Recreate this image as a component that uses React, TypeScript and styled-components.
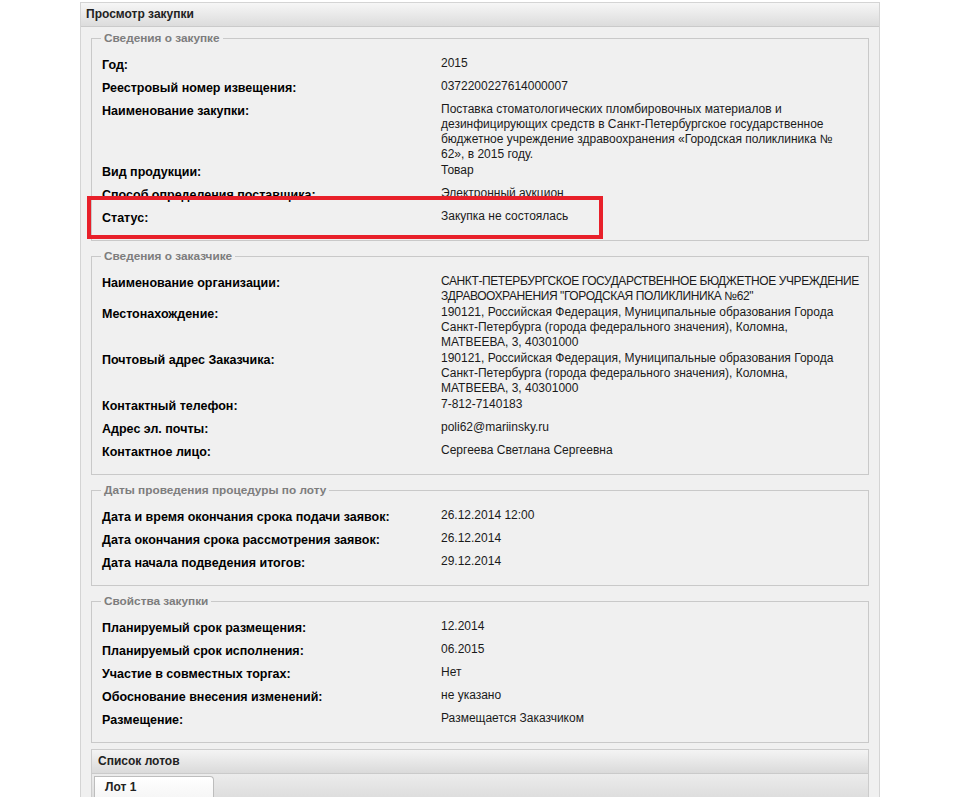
import React from 'react';
import styled, { createGlobalStyle } from 'styled-components';

interface Field {
  label: string;
  lines: string[];
  tight?: boolean;
}

interface Section {
  title: string;
  fields: Field[];
}

const address = [
  '190121, Российская Федерация, Муниципальные образования Города',
  'Санкт-Петербурга (города федерального значения), Коломна,',
  'МАТВЕЕВА, 3, 40301000',
];

const sections: Section[] = [
  {
    title: 'Сведения о закупке',
    fields: [
      { label: 'Год:', lines: ['2015'] },
      { label: 'Реестровый номер извещения:', lines: ['0372200227614000007'] },
      {
        label: 'Наименование закупки:',
        lines: [
          'Поставка стоматологических пломбировочных материалов и',
          'дезинфицирующих средств в Санкт-Петербургское государственное',
          'бюджетное учреждение здравоохранения «Городская поликлиника №',
          '62», в 2015 году.',
        ],
      },
      { label: 'Вид продукции:', lines: ['Товар'] },
      { label: 'Способ определения поставщика:', lines: ['Электронный аукцион'] },
      { label: 'Статус:', lines: ['Закупка не состоялась'] },
    ],
  },
  {
    title: 'Сведения о заказчике',
    fields: [
      {
        label: 'Наименование организации:',
        lines: [
          'САНКТ-ПЕТЕРБУРГСКОЕ ГОСУДАРСТВЕННОЕ БЮДЖЕТНОЕ УЧРЕЖДЕНИЕ',
          'ЗДРАВООХРАНЕНИЯ "ГОРОДСКАЯ ПОЛИКЛИНИКА №62"',
        ],
        tight: true,
      },
      { label: 'Местонахождение:', lines: address },
      { label: 'Почтовый адрес Заказчика:', lines: address },
      { label: 'Контактный телефон:', lines: ['7-812-7140183'] },
      { label: 'Адрес эл. почты:', lines: ['poli62@mariinsky.ru'] },
      { label: 'Контактное лицо:', lines: ['Сергеева Светлана Сергеевна'] },
    ],
  },
  {
    title: 'Даты проведения процедуры по лоту',
    fields: [
      { label: 'Дата и время окончания срока подачи заявок:', lines: ['26.12.2014 12:00'] },
      { label: 'Дата окончания срока рассмотрения заявок:', lines: ['26.12.2014'] },
      { label: 'Дата начала подведения итогов:', lines: ['29.12.2014'] },
    ],
  },
  {
    title: 'Свойства закупки',
    fields: [
      { label: 'Планируемый срок размещения:', lines: ['12.2014'] },
      { label: 'Планируемый срок исполнения:', lines: ['06.2015'] },
      { label: 'Участие в совместных торгах:', lines: ['Нет'] },
      { label: 'Обоснование внесения изменений:', lines: ['не указано'] },
      { label: 'Размещение:', lines: ['Размещается Заказчиком'] },
    ],
  },
];

const App: React.FC = () => {
  return (
    <Page>
      <GlobalStyle />
      <Panel>
        <PanelHeader>Просмотр закупки</PanelHeader>
        <PanelBody>
          {sections.map((s) => (
            <Group key={s.title}>
              <Legend>{s.title}</Legend>
              {s.fields.map((f) => (
                <Row key={f.label}>
                  <Label>{f.label}</Label>
                  <Value $tight={f.tight}>{f.lines.join('\n')}</Value>
                </Row>
              ))}
            </Group>
          ))}
          <Lots>
            <LotsHeader>Список лотов</LotsHeader>
            <TabStrip>
              <Tab>Лот 1</Tab>
            </TabStrip>
          </Lots>
        </PanelBody>
      </Panel>
      <Highlight />
    </Page>
  );
};

const GlobalStyle = createGlobalStyle`
  html, body {
    margin: 0;
    padding: 0;
    background: #ffffff;
  }
  body {
    font-family: "Liberation Sans", Arial, sans-serif;
    color: #111;
  }
`;

const Page = styled.div`
  position: relative;
  width: 958px;
  height: 797px;
  overflow: hidden;
  padding-top: 2px;
  box-sizing: border-box;
`;

const Panel = styled.div`
  margin-left: 80px;
  width: 800px;
  box-sizing: border-box;
  border: 1px solid #d4d4d4;
  background: #f0f0f0;
`;

const PanelHeader = styled.div`
  height: 23px;
  line-height: 23px;
  padding-left: 5px;
  font-size: 12px;
  font-weight: bold;
  color: #222;
  background: linear-gradient(#f6f6f6, #dcdcdc);
  border-bottom: 1px solid #cacaca;
`;

const PanelBody = styled.div`
  padding: 4px 10px 0;
`;

const Group = styled.fieldset`
  margin: 0 0 8px;
  padding: 10px 0 9px 10px;
  border: 1px solid #c9c9c9;
  min-width: 0;
`;

const Legend = styled.legend`
  margin-left: -1px;
  padding: 0 3px;
  font-size: 11.8px;
  font-weight: bold;
  line-height: 14px;
  color: #7d7d7d;
`;

const Row = styled.div`
  display: grid;
  grid-template-columns: 339px 1fr;
  align-items: start;
  box-sizing: border-box;
  min-height: 23px;
  padding-top: 1px;
`;

const Label = styled.div`
  padding-top: 2px;
  font-size: 12.5px;
  font-weight: bold;
  line-height: 15px;
  color: #000;
`;

const Value = styled.div<{ $tight?: boolean }>`
  white-space: pre;
  font-size: 12px;
  line-height: 15px;
  color: #1a1a1a;
  letter-spacing: ${({ $tight }) => ($tight ? '-0.4px' : 'normal')};
`;

const Lots = styled.div`
  margin-top: -2px;
  border: 1px solid #cccccc;
  border-bottom: none;
`;

const LotsHeader = styled.div`
  height: 23px;
  line-height: 23px;
  padding-left: 6px;
  font-size: 12px;
  font-weight: bold;
  color: #222;
  background: linear-gradient(#f4f4f4, #dadada);
  border-bottom: 1px solid #cacaca;
`;

const TabStrip = styled.div`
  display: flex;
  height: 30px;
  padding: 2px 0 0 2px;
  background: linear-gradient(#ececec, #d8d8d8);
`;

const Tab = styled.div`
  width: 120px;
  padding-left: 10px;
  box-sizing: border-box;
  font-size: 12px;
  font-weight: bold;
  line-height: 20px;
  color: #222;
  background: linear-gradient(#ffffff, #f2f2f2);
  border: 1px solid #bdbdbd;
  border-bottom: none;
  border-top-right-radius: 4px;
`;

const Highlight = styled.div`
  position: absolute;
  left: 87px;
  top: 196px;
  width: 516px;
  height: 43px;
  box-sizing: border-box;
  border: 4px solid #e8202a;
  pointer-events: none;
`;

export default App;
